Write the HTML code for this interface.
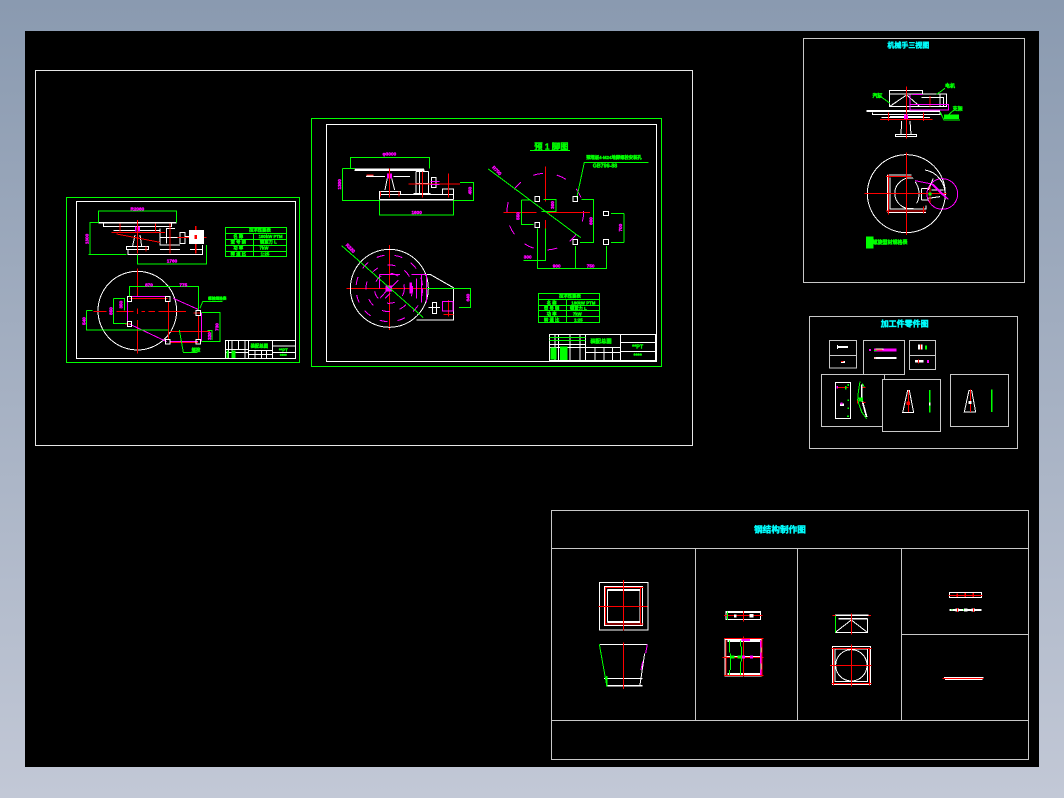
<!DOCTYPE html>
<html lang="zh"><head><meta charset="utf-8"><title>CAD</title>
<style>
html,body{margin:0;padding:0;width:1064px;height:798px;overflow:hidden;background:linear-gradient(180deg,#8a9ab0 0%,#c2c8d6 100%)}
#c{position:absolute;left:25px;top:31px;width:1014px;height:736px;background:#000}
svg{position:absolute;left:0;top:0}
path,rect,circle{fill:none;shape-rendering:crispEdges}
.w{stroke:#fff;stroke-width:3}.y{stroke:#c8c8c8;stroke-width:3}.g{stroke:#0f0;stroke-width:3}.r{stroke:#f00;stroke-width:3}.m{stroke:#f0f;stroke-width:3}
.t5{stroke-width:5}.t7{stroke-width:8}
.d{stroke-dasharray:24 30}
.d2{stroke-dasharray:30 42}
text{font-family:"Liberation Sans","Noto Sans CJK SC",sans-serif;font-weight:700;text-anchor:middle}
.tm{fill:#f0f;stroke:#f0f;stroke-width:1.2;font-size:14px}
.tg{fill:#0f0;stroke:#0f0;stroke-width:1.2;font-size:13px}
.tc{fill:#0ff;stroke:#0ff;stroke-width:1.2;font-size:21px}
</style></head><body>
<div id="c"></div>
<svg width="1064" height="798" viewBox="0 0 1064 798">
<g fill="none" style="shape-rendering:crispEdges">
<rect x="35.5" y="70.5" width="657" height="375" stroke="#e6e6e6" style="fill:none"/>
<rect x="311.5" y="118.5" width="350" height="248" stroke="#0f0" style="fill:none"/>
<rect x="326.5" y="124.5" width="330" height="237" stroke="#fff" style="fill:none"/>
<rect x="803.5" y="38.5" width="221" height="244" stroke="#c8c8c8" style="fill:none"/>
<rect x="551.5" y="510.5" width="477" height="249" stroke="#c8c8c8" style="fill:none"/>
<path d="M551.5 548.5H1028.5M551.5 720.5H1028.5M695.5 548.5V720.5M797.5 548.5V720.5M901.5 548.5V720.5M901.5 634.5H1028.5" stroke="#c8c8c8" style="fill:none"/>
</g>

<!-- Drawing 1 -->
<g transform="translate(60 190) scale(.3333)">
<rect class="g" x="19" y="22" width="699" height="495"/>
<rect class="w" x="49" y="34" width="658" height="471"/>
<path class="w t5" d="M115 98H350"/>
<path class="w" d="M130 100V109H335V100M200 170H266V178H200ZM204 178V193H428V165M218 168L225 135M245 168L240 135M160 122H225M240 122H300M300 115V165H360M345 115H320V160M300 143H360M375 140H387M390 178H428M300 178H360"/>
<rect class="w" x="360" y="128" width="15" height="32"/>
<path class="r" d="M232 90V190M155 127H315M170 132L300 157M330 100V190M352 143H440M180 100V125M287 100V125M258 170V185"/>
<path class="r t5" d="M407 108V190"/>
<rect x="387" y="120" width="45" height="42" style="fill:#fff"/>
<rect x="403" y="135" width="8" height="12" style="fill:#f00"/>
<path class="m t5" d="M227 110V125M237 110V125"/>
<path class="g" d="M115 97V63H350V97M90 193V97H115M85 193H200M232 193V222H439V165"/>
<circle class="w" cx="232" cy="362" r="118"/>
<path class="r" d="M232 235V320M232 355V372M232 390V490M100 364H140M170 364H220M245 364H255M265 364H285M295 364H378M400 369H424M208 325H323M325 335V450M330 424H450M416 375V450M330 457H414M195 402H215"/>
<path class="m" d="M208 320H323M203 327V400M340 325L414 358M208 402L320 455M330 454H414M424 368V455"/>
<g class="w"><rect class="w" x="202" y="320" width="13" height="14"/><rect class="w" x="317" y="320" width="13" height="14"/><rect class="w" x="202" y="395" width="13" height="14"/><rect class="w" x="408" y="362" width="13" height="14"/><rect class="w" x="317" y="448" width="13" height="14"/><rect class="w" x="408" y="448" width="13" height="14"/></g>
<path class="g" d="M208 320V290H416V360M160 325H193V362M160 325V400H200M80 362V420H325M80 362H98M425 367H480V455H425M442 422H456V450M358 420L370 487H412M420 355L428 335H488"/>
<text class="tm" x="232" y="62">R2060</text>
<text class="tm" transform="translate(86 147) rotate(-90)">1300</text>
<text class="tm" x="336" y="217">1760</text>
<text class="tm" x="267" y="290">870</text>
<text class="tm" x="370" y="289">775</text>
<text class="tm" transform="translate(158 363) rotate(-90)">850</text>
<text class="tm" transform="translate(188 344) rotate(-90)">350</text>
<text class="tm" transform="translate(77 393) rotate(-90)">540</text>
<text class="tm" transform="translate(476 411) rotate(-90)">730</text>
<text class="tm" transform="translate(453 438) rotate(-90)">320</text>
<text class="tg" x="472" y="329" style="font-size:11px">螺栓规格表</text>
<text class="tg" x="408" y="484">螺栓</text>
<rect class="g" x="496" y="112" width="184" height="88"/>
<path class="g" d="M496 130H680M496 148H680M496 166H680M496 184H680M580 130V200"/>
<text class="tg" x="600" y="125">技术性能表</text>
<text class="tg" x="535" y="144">名 称</text><text class="tg" x="632" y="144">180kW PTM</text>
<text class="tg" x="535" y="161">型 号 别</text><text class="tg" x="625" y="161">锁紧力 L</text>
<text class="tg" x="535" y="179">功 率</text><text class="tg" x="612" y="179">7kW</text>
<text class="tg" x="535" y="197">转 速 比</text><text class="tg" x="615" y="197">1:25</text>
<rect class="w" x="496" y="451" width="210" height="54"/>
<path class="w" d="M566 451V505M637 451V505M637 468H706M637 487H706M496 478H566M496 487H566M506 451V505M516 451V505M535 451V478M555 451V505M566 482H637M566 493H637M585 482V505M605 482V505M620 482V505"/>
<rect x="500" y="482" width="6" height="22" style="fill:#0f0"/><rect x="514" y="482" width="12" height="22" style="fill:#0f0"/>
<text class="tg" x="598" y="473">装配总图</text>
<text class="tg" x="670" y="484">**PT</text><text class="tg" x="670" y="501">****</text>
</g>

<!-- Drawing 2 left -->
<g transform="translate(310 115) scale(.3333)">
<path class="w" d="M135 163V167H342V163M168 184H225M250 184H300M225 225L232 190M254 225L245 190M208 254V230H272V237M208 238H430V253M398 238V222H430V238M318 170V235M328 170V235M355 170V235M310 235H362M318 170H355M318 205H355M378 190V218M345 478H360L430 518V615H320M355 578H390"/>
<path class="w t5" d="M135 163H342M208 254H430M170 184H190"/>
<rect class="w" x="365" y="188" width="13" height="30"/>
<rect class="w" x="367" y="562" width="12" height="34"/>
<path class="r" d="M238 160V248M170 180H190M337 170V248M295 207H450M415 175V248M212 230V245M267 230V245M238 390V645M110 520H350M415 555V605M400 598H430"/>
<path class="m t5" d="M234 175V190M243 175V190"/>
<path class="m" d="M362 200H388M362 208H388"/>
<path class="g" d="M122 160V127H358V160M97 160V256H208M97 160H135M208 256V300H430V256M430 256H490V203H450"/>
<circle class="w" cx="238" cy="520" r="117"/>
<circle class="m d" cx="238" cy="520" r="100"/>
<circle class="m d" cx="238" cy="520" r="70"/>
<circle class="m d" cx="238" cy="520" r="45"/>
<path class="m" d="M305 478H350V563M320 490V550M335 478V563M208 478H270M208 478V520M225 550L240 535M265 495L245 515M210 550L232 525M397 560H429V588H397Z"/>
<path class="m t7" d="M302 503V536"/>
<rect x="226" y="512" width="20" height="18" style="fill:#f0f"/>
<path class="g" d="M95 392L340 608M350 520H482V577H447"/>
<text class="tm" x="238" y="122">φ3000</text>
<text class="tm" transform="translate(93 208) rotate(-90)">1300</text>
<text class="tm" x="320" y="297">1600</text>
<text class="tm" transform="translate(484 227) rotate(-90)">450</text>
<text class="tm" transform="translate(479 548) rotate(-90)">640</text>
<text class="tm" transform="translate(118 403) rotate(45)">R320</text>
</g>

<!-- Drawing 2 right -->
<g transform="translate(480 115) scale(.3333)">
<circle class="m d2" cx="196" cy="290" r="115"/>
<path class="r" d="M196 155V260M196 315V340M70 292H170M200 292H330"/>
<path class="g" d="M25 162L302 368M150 106H270M505 142H313L290 250M190 253H228V290H185M305 253H340V382H300M125 255V328H160M125 255H150M432 295V382M393 295H432M393 382H432M172 340V461H380V393M286 393V461M196 340V437H130"/>
<g><rect class="w" x="165" y="244" width="14" height="16"/><rect class="w" x="279" y="244" width="14" height="16"/><rect class="w" x="165" y="322" width="14" height="16"/><rect class="w" x="279" y="373" width="14" height="16"/><rect class="w" x="370" y="289" width="16" height="13"/><rect class="w" x="370" y="374" width="16" height="14"/></g>
<text x="214" y="104" style="fill:#0f0;stroke:#0f0;stroke-width:1.2;font-size:25px">预 1 脚图</text>
<text class="tg" x="402" y="132">预埋板4-M24地脚螺栓安装孔</text>
<text class="tg" x="375" y="157" style="font-size:16px">GB799-88</text>
<text class="tm" transform="translate(47 170) rotate(45)">R700</text>
<text class="tm" transform="translate(222 270) rotate(-90)">300</text>
<text class="tm" transform="translate(119 303) rotate(-90)">550</text>
<text class="tm" transform="translate(338 318) rotate(-90)">600</text>
<text class="tm" transform="translate(426 338) rotate(-90)">700</text>
<text class="tm" x="143" y="431">300</text><text class="tm" x="230" y="458">900</text><text class="tm" x="332" y="458">750</text>
<rect class="g" x="175" y="535" width="183" height="88"/>
<path class="g" d="M175 553H358M175 571H358M175 587H358M175 604H358M259 553V623"/>
<text class="tg" x="270" y="548">技术性能表</text>
<text class="tg" x="215" y="568">名 称</text><text class="tg" x="310" y="568">180kW PTM</text>
<text class="tg" x="215" y="585">型 号 别</text><text class="tg" x="295" y="585">锁紧力 L</text>
<text class="tg" x="215" y="601">功 率</text><text class="tg" x="292" y="601">7kW</text>
<text class="tg" x="215" y="619">转 速 比</text><text class="tg" x="295" y="619">1:25</text>
<rect class="w" x="208" y="658" width="318" height="78"/>
<path class="w" d="M317 658V736M421 658V736M421 682H526M421 709H526M208 688H317M208 697H317M225 658V736M235 658V736M270 658V736M300 658V736M317 698H421M317 713H421M345 698V736M372 698V736M397 698V736"/>
<path class="g" d="M208 667H317M208 677H317"/>
<rect x="212" y="697" width="18" height="36" style="fill:#0f0"/><rect x="240" y="695" width="22" height="40" style="fill:#0f0"/>
<text class="tg" x="363" y="684" style="font-size:16px">装配总图</text>
<text class="tg" x="473" y="701" style="font-size:16px">**PT</text><text class="tg" x="473" y="727" style="font-size:16px">****</text>
</g>

<!-- Top right -->
<g transform="translate(800 35) scale(.3333)">
<path class="w" d="M268 167H368V177H268ZM268 177H440V215H268ZM268 215L320 180L360 215M217 232V238H420V232M270 245H370M245 248H390M305 258L303 298M330 258L333 298M365 188H430V215M420 178V215"/>
<path class="w t5" d="M200 228H420"/>
<rect class="w" x="286" y="298" width="64" height="6"/>
<path class="r" d="M319 155V310M240 253H398M265 232V258M370 232V258M390 183V215"/>
<path class="m" d="M330 178V225H445V208H330M338 178H368"/>
<path class="m t5" d="M315 238V252M322 238V252"/>
<path class="g" d="M240 183L270 205M410 178L435 160M420 230L432 255H480M462 225L445 240"/>
<rect x="432" y="238" width="45" height="14" style="fill:#0f0"/>
<circle class="w" cx="319" cy="476" r="117"/>
<circle class="m" cx="427" cy="477" r="46"/>
<path class="w" d="M270 428V522H378V512M262 420H335M262 533H378M340 430A46 46 0 1 0 340 520M375 405A72 72 0 0 1 435 480M345 440A60 60 0 0 1 350 505M365 460V495M365 460H382M365 495H385M400 430L385 465M395 465L430 465M385 490L420 485"/>
<path class="w t5" d="M264 420V530"/>
<path class="r" d="M319 352V600M193 476H440M258 425H335M258 528H378M265 418V538M370 515V535M390 455V505"/>
<path class="m" d="M345 437L400 448L445 493"/>
<path class="m t5" d="M395 447L440 490"/>
<rect x="385" y="472" width="10" height="10" style="fill:#0f0"/>
<rect x="198" y="605" width="22" height="35" style="fill:#0f0"/>
<text class="tc" x="325" y="38">机械手三视图</text>
<text class="tg" x="232" y="188" style="font-size:15px">汽缸</text><text class="tg" x="450" y="158" style="font-size:15px">电机</text><text class="tg" x="473" y="227" style="font-size:15px">支架</text>
<text class="tg" x="270" y="627" style="font-size:15px">螺旋型材规格表</text>
</g>

<!-- Parts -->
<g transform="translate(805 312) scale(.3333)">
<rect class="y" x="13" y="13" width="624" height="396"/>
<text class="tc" x="299" y="43" style="font-size:24px">加工件零件图</text>
<rect class="y" x="73" y="85" width="82" height="83"/><path class="y" d="M73 130H155"/>
<rect class="y" x="175" y="85" width="123" height="102"/>
<rect class="y" x="313" y="85" width="78" height="87"/><path class="y" d="M313 130H391"/>
<rect class="y" x="49" y="188" width="190" height="156"/>
<rect x="232" y="202" width="174" height="157" class="y" style="fill:#000"/>
<rect class="y" x="436" y="187" width="175" height="157"/>
<path class="w t5" d="M96 105H129M108 150H120M207 138H275"/><path class="w" d="M97 99V111"/>
<path class="r" d="M108 149H116"/>
<rect x="192" y="111" width="6" height="6" style="fill:#f0f"/>
<path class="m t7" d="M207 114H275"/><path class="w t5" d="M212 112H235"/><path class="r" d="M212 114H232M208 138H212"/><path class="g" d="M207 115H215"/>
<rect x="339" y="97" width="14" height="16" style="fill:#fff"/><path class="r" d="M347 97V113"/><rect x="360" y="100" width="6" height="12" style="fill:#0f0"/>
<rect x="330" y="144" width="26" height="8" style="fill:#fff"/><path class="r" d="M340 142V154"/><rect x="366" y="144" width="6" height="9" style="fill:#f0f"/>
<rect class="w" x="91" y="211" width="45" height="108"/>
<path class="r" d="M96 226H130"/><path class="m t5" d="M97 222V230"/><path class="g t5" d="M122 222V232M130 216V222M127 265H132M127 289H132M126 313H132"/>
<rect x="105" y="274" width="12" height="8" style="fill:#fff"/><rect x="107" y="272" width="6" height="5" style="fill:#f0f"/>
<path class="g" d="M165 208L160 240L158 265L170 300L185 320M172 215L178 225"/>
<path class="w t5" d="M170 218V260L185 315"/>
<rect x="160" y="257" width="14" height="11" style="fill:#0f0"/>
<path class="r" d="M172 226H182M172 272H182M158 265V275"/>
<path class="w" d="M308 235L293 302H326L313 235ZM492 235L478 300H512L500 235Z"/>
<path class="r" d="M310 235V300M496 232V300"/><rect x="304" y="268" width="11" height="11" style="fill:#f00"/><rect x="491" y="267" width="9" height="9" style="fill:#fff"/>
<path class="g t5" d="M374 234V302M560 232V300"/>
<path class="w t5" d="M374 272V280"/>
</g>

<!-- Bottom -->
<g transform="translate(550 510) scale(.3333)">
<text class="tc" x="690" y="68" style="font-size:26px">钢结构制作图</text>
<rect class="w" x="148" y="217" width="146" height="143"/>
<rect class="w" x="163" y="229" width="115" height="118"/>
<path class="w t5" d="M172 240H270M172 336H270"/><path class="w" d="M172 238V338M270 238V338"/>
<path class="r" d="M220 210V362M145 289H292M166 232V345M272 232V345M165 233H280M165 342H280"/>
<path class="w" d="M148 403H292M284 430L270 525M162 505H278"/>
<path class="w t5" d="M170 527H278"/>
<path class="g" d="M148 403L170 525"/><path class="g t5" d="M170 498V530"/>
<path class="m" d="M292 403L287 430M278 455L273 480"/>
<path class="r" d="M220 397V537"/>
<rect class="w" x="528" y="305" width="104" height="24"/>
<path class="w t5" d="M528 307H632"/>
<path class="r" d="M522 316H638M580 303V335"/>
<path class="g" d="M532 305V330"/>
<rect x="552" y="314" width="8" height="9" style="fill:#fff"/><rect x="598" y="312" width="13" height="11" style="fill:#fff"/>
<rect class="w" x="525" y="388" width="108" height="110"/>
<path class="w t5" d="M525 441H638M532 393H630M532 492H630"/>
<path class="g" d="M538 392V428M542 430V480M538 480V498M572 392V410M575 410V455M571 455V498"/>
<path class="r" d="M580 380V500M517 442H640M522 385H640M522 497H640M636 385V500M528 390V498"/>
<path class="m t5" d="M632 392V412M632 428V460M632 478V495M575 390H600"/>
<rect x="540" y="437" width="14" height="9" style="fill:#0f0"/><rect x="562" y="437" width="12" height="9" style="fill:#0f0"/><rect x="576" y="437" width="9" height="9" style="fill:#f0f"/><rect x="600" y="437" width="9" height="9" style="fill:#f0f"/>
</g>
<g transform="translate(795 545) scale(.3333)">
<path class="w" d="M121 221V262H218V221M121 262L169 225L217 262"/>
<path class="w t5" d="M120 211H220M130 221H218"/>
<path class="g" d="M121 212V262"/>
<path class="r" d="M169 205V268M112 211H122M220 211H228"/>
<rect class="w" x="113" y="305" width="113" height="113"/>
<rect class="w" x="120" y="312" width="98" height="98"/>
<circle class="w" cx="169" cy="361" r="47"/>
<path class="r" d="M105 361H230M169 298V425M115 310V422M224 310V422M110 310H230M110 415H230"/>
<rect class="w" x="463" y="142" width="97" height="15"/>
<path class="r" d="M460 151H562"/><path class="r t5" d="M487 146V156M511 144V156M535 144V156"/>
<path class="w t5" d="M463 195H560"/><rect x="482" y="190" width="10" height="10" style="fill:#fff"/><rect x="507" y="190" width="10" height="10" style="fill:#fff"/><rect x="530" y="190" width="10" height="10" style="fill:#fff"/>
<path class="r" d="M487 189V201M535 189V201M442 401H566"/>
<path class="w" d="M447 397H566M450 404H563"/>
<path class="g" d="M471 192V197M506 192V197"/>
</g>
</svg>
</body></html>
